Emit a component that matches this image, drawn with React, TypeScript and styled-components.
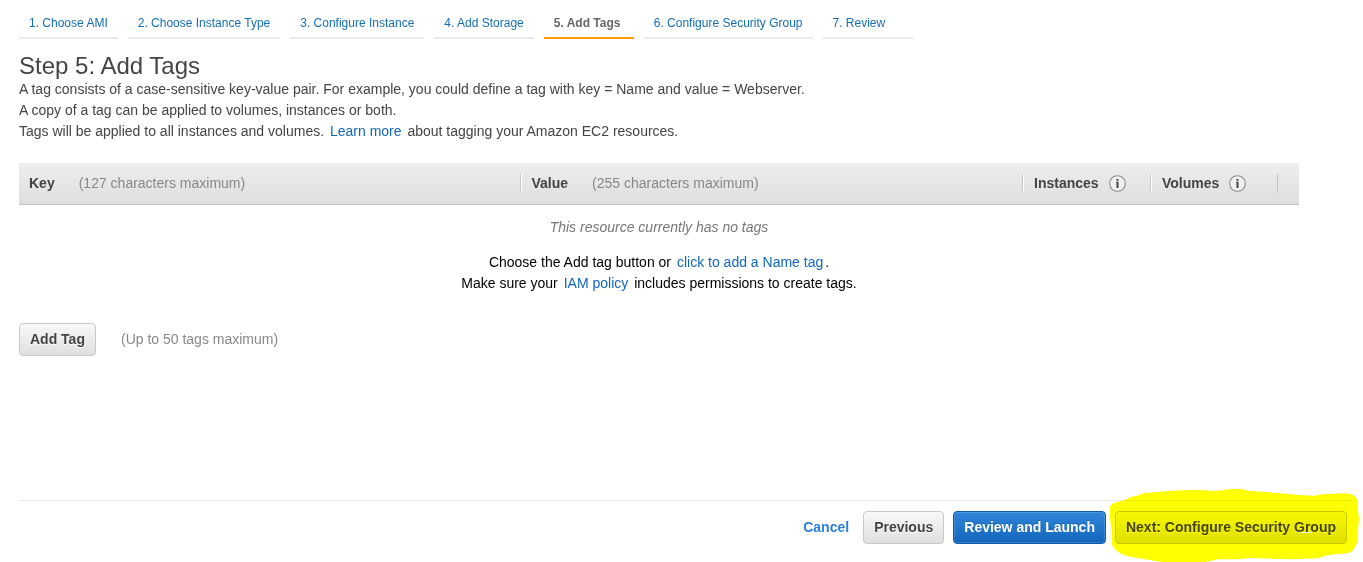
import React from "react";
import styled, { createGlobalStyle, css } from "styled-components";

const GlobalStyle = createGlobalStyle`
  * { box-sizing: border-box; }
  body {
    margin: 0;
    background: #fff;
    color: #444;
    font: 14px/21px "Liberation Sans", Arial, sans-serif;
  }
`;

const Page = styled.div`
  display: flex;
  flex-direction: column;
  min-height: 100vh;
  padding: 8px 11px 0 19px;
`;

const Steps = styled.nav`
  display: flex;
  flex-wrap: wrap;
  gap: 10px;
`;

const Step = styled.a<{ $active?: boolean }>`
  min-width: 90px;
  height: 31px;
  padding: 0 10px;
  border-bottom: 2px solid ${(p) => (p.$active ? "#f90" : "#eaeaea")};
  color: ${(p) => (p.$active ? "#666" : "#146eb4")};
  font-size: 12px;
  font-weight: ${(p) => (p.$active ? "bold" : "normal")};
  line-height: 30px;
  text-decoration: none;
  white-space: nowrap;
`;

const Main = styled.main`
  flex: 1;
`;

const Title = styled.h1`
  margin: 14px 0 0;
  font-size: 24px;
  font-weight: normal;
  line-height: 26px;
`;

const Intro = styled.p`
  margin: 0;
`;

const TextLink = styled.a`
  margin: 0 2px;
  color: #1166bb;
  text-decoration: none;
`;

const TagTable = styled.table`
  width: 100%;
  max-width: 1280px;
  margin-top: 21px;
  border-collapse: separate;
  border-spacing: 0;
  table-layout: fixed;
`;

const Column = styled.col<{ $width?: number }>`
  width: ${(p) => (p.$width ? `${p.$width}px` : "auto")};
`;

const HeadCell = styled.th`
  height: 42px;
  padding: 0;
  border-bottom: 1px solid #c4c4c4;
  background: linear-gradient(#eee, #dedede);
  text-align: left;
`;

const HeadContent = styled.div<{ $last?: boolean }>`
  display: flex;
  align-items: center;
  height: 19px;
  padding-left: 10px;
  border-right: 1px solid ${(p) => (p.$last ? "#c4c4c4" : "#fff")};
  box-shadow: ${(p) => (p.$last ? "none" : "inset -1px 0 #c8c8c8")};
  white-space: nowrap;
`;

const Limit = styled.span`
  margin-left: 24px;
  color: #888;
  font-weight: normal;
`;

const InfoButton = styled.button`
  display: flex;
  margin-left: 10px;
  padding: 0;
  border: 0;
  background: none;
`;

const EmptyCell = styled.td`
  padding: 12px 0 0;
  color: #000;
  text-align: center;
`;

const EmptyNote = styled.p`
  margin: 0 0 14px;
  color: #777;
  font-style: italic;
`;

const AddRow = styled.div`
  display: flex;
  align-items: center;
  gap: 25px;
  margin: 29px 0 24px;
  color: #888;
`;

const Button = styled.button<{ $primary?: boolean }>`
  height: 33px;
  padding: 0 10px;
  border: 1px solid #c8c8c8;
  border-radius: 4px;
  background: linear-gradient(#f8f8f8, #dfdfdf);
  color: #444;
  font: bold 14px/21px "Liberation Sans", Arial, sans-serif;
  text-shadow: 0 1px #fff;
  white-space: nowrap;
  ${(p) =>
    p.$primary &&
    css`
      border-color: #0f5aa8;
      background: linear-gradient(#3186dc, #1166bb);
      box-shadow: inset 0 0 0 1px rgba(255, 255, 255, 0.15);
      color: #fff;
      text-shadow: 0 -1px rgba(0, 0, 0, 0.2);
    `}
`;

const Footer = styled.footer`
  display: flex;
  align-items: center;
  justify-content: flex-end;
  gap: 9px;
  height: 62px;
  padding: 0 5px 8px 0;
  border-top: 1px solid #eaeaea;
`;

const Cancel = styled.a`
  margin-right: 5px;
  color: #2d7fd8;
  font-weight: bold;
  text-decoration: none;
`;

const Marked = styled.div`
  position: relative;
`;

const Marker = styled.svg`
  position: absolute;
  top: -23px;
  left: -6px;
  width: 252px;
  height: 74px;
  mix-blend-mode: multiply;
  pointer-events: none;
`;

const steps = [
  "1. Choose AMI",
  "2. Choose Instance Type",
  "3. Configure Instance",
  "4. Add Storage",
  "5. Add Tags",
  "6. Configure Security Group",
  "7. Review",
];

function Info({ label }: { label: string }) {
  return (
    <InfoButton type="button" aria-label={label}>
      <svg width="17" height="17" viewBox="0 0 17 17">
        <circle cx="8.5" cy="8.5" r="7.8" fill="#f0f0f0" stroke="#8a8a8a" strokeWidth="1.1" />
        <path d="M7.5 4h2v1.7h-2zM7 6.7h2.5V13h-2V7.5H7z" fill="#444" />
      </svg>
    </InfoButton>
  );
}

export default function App() {
  return (
    <>
      <GlobalStyle />
      <Page>
        <Steps aria-label="Launch steps">
          {steps.map((s, i) => (
            <Step key={s} href="#" $active={i === 4} aria-current={i === 4 ? "step" : undefined}>
              {s}
            </Step>
          ))}
        </Steps>
        <Main>
          <Title>Step 5: Add Tags</Title>
          <Intro>
            A tag consists of a case-sensitive key-value pair. For example, you could define a tag with key = Name and
            value = Webserver.
          </Intro>
          <Intro>A copy of a tag can be applied to volumes, instances or both.</Intro>
          <Intro>
            Tags will be applied to all instances and volumes. <TextLink href="#">Learn more</TextLink> about tagging
            your Amazon EC2 resources.
          </Intro>
          <TagTable>
            <colgroup>
              <Column />
              <Column />
              <Column $width={128} />
              <Column $width={126} />
              <Column $width={21} />
            </colgroup>
            <thead>
              <tr>
                <HeadCell scope="col">
                  <HeadContent>
                    Key<Limit>(127 characters maximum)</Limit>
                  </HeadContent>
                </HeadCell>
                <HeadCell scope="col">
                  <HeadContent>
                    Value<Limit>(255 characters maximum)</Limit>
                  </HeadContent>
                </HeadCell>
                <HeadCell scope="col">
                  <HeadContent>
                    Instances
                    <Info label="About instances" />
                  </HeadContent>
                </HeadCell>
                <HeadCell scope="col">
                  <HeadContent $last>
                    Volumes
                    <Info label="About volumes" />
                  </HeadContent>
                </HeadCell>
                <HeadCell as="td" />
              </tr>
            </thead>
            <tbody>
              <tr>
                <EmptyCell colSpan={5}>
                  <EmptyNote>This resource currently has no tags</EmptyNote>
                  <Intro>
                    Choose the Add tag button or <TextLink href="#">click to add a Name tag</TextLink>.
                  </Intro>
                  <Intro>
                    Make sure your <TextLink href="#">IAM policy</TextLink> includes permissions to create tags.
                  </Intro>
                </EmptyCell>
              </tr>
            </tbody>
          </TagTable>
          <AddRow>
            <Button type="button">Add Tag</Button>
            <span>(Up to 50 tags maximum)</span>
          </AddRow>
        </Main>
        <Footer>
          <Cancel href="#">Cancel</Cancel>
          <Button type="button">Previous</Button>
          <Button type="button" $primary>
            Review and Launch
          </Button>
          <Marked>
            <Button type="button">Next: Configure Security Group</Button>
            <Marker viewBox="57 24 756 222" aria-hidden="true">
              <path
                fill="#ff0"
                fillRule="evenodd"
                d="M60 78L69 70L90 64L105 60L120 52L140 47L160 40L195 37L245 32L315 29L375 33L425 27L455 27L475 32L525 36L575 40L625 45L675 47L695 43L765 40L785 43L797 50L803 62L804 92L807 115L804 150L803 180L797 200L787 212L775 220L735 223L705 227L685 235L600 238L480 234L445 238L385 238L345 246L215 246L180 240L145 235L110 228L90 220L75 208L66 194L66 162L63 142L60 110ZM612 155L627 153L640 157L665 155V159H640L630 157Z"
              />
            </Marker>
          </Marked>
        </Footer>
      </Page>
    </>
  );
}
